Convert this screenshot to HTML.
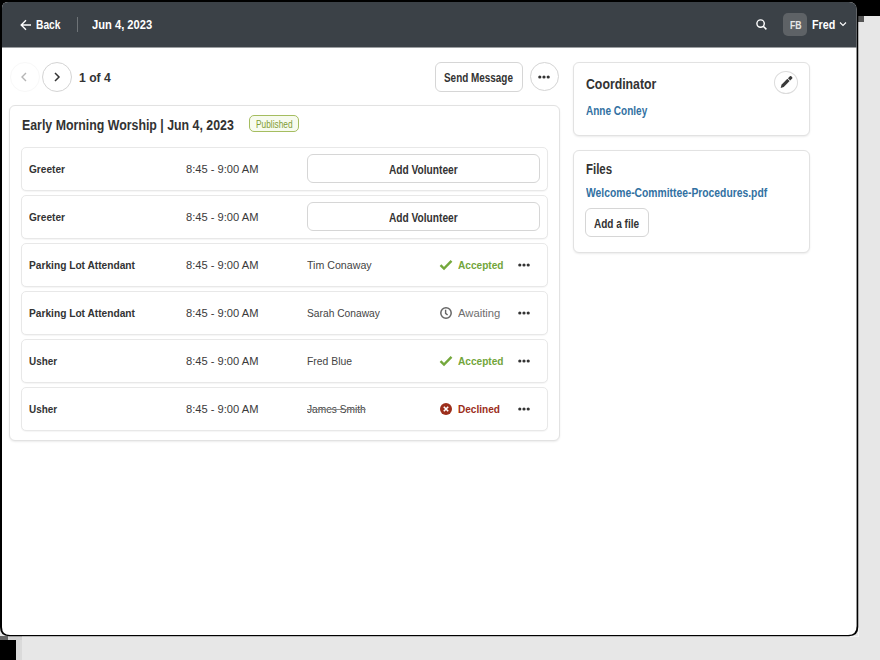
<!DOCTYPE html>
<html><head><meta charset="utf-8">
<style>
*{box-sizing:border-box;margin:0;padding:0}
html,body{width:880px;height:660px;overflow:hidden;background:#e7e7e7;font-family:"Liberation Sans",sans-serif;position:relative}
.abs{position:absolute}
.t{position:absolute;white-space:nowrap;line-height:1;transform-origin:0 0}
.w{color:#fff;font-weight:bold}
.card{position:absolute;background:#fff;border:1px solid #e2e2e2;border-radius:6px;box-shadow:0 1px 2px rgba(0,0,0,0.08)}
.row{position:absolute;left:21px;width:527px;height:44px;border:1px solid #e8e8e8;border-radius:5px;background:#fff;box-shadow:0 1px 1px rgba(0,0,0,0.04)}
.btn{position:absolute;border:1px solid #d6d6d6;border-radius:6px;background:#fff}
.circ{position:absolute;border:1px solid #d4d4d4;border-radius:50%;background:#fff}
.fbt{font-size:10px;font-weight:bold;color:#e6e6e6}
.pgt{font-size:13px;font-weight:bold;color:#333}
.h1{font-size:14px;font-weight:bold;color:#333}
.pubt{font-size:10px;color:#7f9c35}
.role{font-size:11px;font-weight:bold;color:#333}
.time{font-size:11px;color:#3a3a3a}
.name{font-size:11px;color:#444}
.strike{text-decoration:line-through;text-decoration-color:#8a8a8a;text-decoration-thickness:1px}
.bt{font-size:12px;font-weight:bold;color:#333}
.st{font-size:11px;font-weight:bold}
.acc{color:#72a53a}.awt{color:#6e6e6e;font-weight:normal}.dec{color:#9c2e1b}
.h2{font-size:14px;font-weight:bold;color:#333}
.link{font-size:12px;font-weight:bold;color:#3271a2}

</style></head><body>
<div class="abs" style="left:858px;top:0;width:22px;height:16px;background:#000"></div>
<div class="abs" style="left:858px;top:16px;width:6px;height:6px;background:#555"></div>
<div class="abs" style="left:0;top:640px;width:16px;height:20px;background:#000"></div>
<div class="abs" style="left:8px;top:636px;width:14px;height:4px;background:#d2d2d2"></div>
<div class="abs" style="left:16px;top:640px;width:6px;height:20px;background:#dadada"></div>
<div class="abs" style="left:0;top:636px;width:8px;height:4px;background:#666"></div>
<div class="abs" style="left:858px;top:22px;width:1px;height:615px;background:#f6f6f6"></div>
<div class="abs" style="left:22px;top:636px;width:836px;height:1px;background:#f6f6f6"></div>
<svg class="abs" style="left:0;top:0" width="880" height="660"><path d="M0 0H858.3V627Q858.3 636.2 849 636.2H9Q0 636.2 0 627Z" fill="#000"/><path d="M8 2H849Q856.6 2 856.6 9.5V626Q856.6 635 848 635H10Q2 635 2 627V8Q2 2 8 2Z" fill="#fff"/><path d="M8 2H849Q856.6 2 856.6 9.5V47.5H2V8Q2 2 8 2Z" fill="#3b4147"/></svg>
<svg class="abs" style="left:20px;top:19px" width="12" height="12" viewBox="0 0 12 12"><path d="M11 6H1.5M6 1.2L1.2 6 6 10.8" stroke="#fff" stroke-width="1.4" fill="none"/></svg>
<div class="abs" style="left:77px;top:17px;width:1px;height:15px;background:#6e7377"></div>
<svg class="abs" style="left:755px;top:18px" width="14" height="14" viewBox="0 0 14 14"><circle cx="5.6" cy="5.6" r="3.7" stroke="#fff" stroke-width="1.4" fill="none"/><path d="M8.3 8.3L11.4 11.4" stroke="#fff" stroke-width="1.5"/></svg>
<div class="abs" style="left:783px;top:13px;width:24px;height:23px;background:#5e6266;border-radius:5px"></div>
<svg class="abs" style="left:839px;top:21px" width="8" height="6" viewBox="0 0 8 6"><path d="M1 1.5L4 4.5 7 1.5" stroke="#fff" stroke-width="1.1" fill="none"/></svg>
<div class="circ" style="left:10px;top:62px;width:30px;height:30px;border-color:#f8f8f8"></div>
<svg class="abs" style="left:19px;top:71px" width="10" height="12" viewBox="0 0 10 12"><path d="M7 2L3 6 7 10" stroke="#b5b5b5" stroke-width="1.4" fill="none"/></svg>
<div class="circ" style="left:42px;top:62px;width:30px;height:30px"></div>
<svg class="abs" style="left:52px;top:71px" width="10" height="12" viewBox="0 0 10 12"><path d="M3 2L7 6 3 10" stroke="#333" stroke-width="1.5" fill="none"/></svg>
<div class="btn" style="left:435px;top:62px;width:88px;height:30px"></div>
<div class="circ" style="left:530px;top:62px;width:29px;height:29px"></div>
<svg class="abs" style="left:537px;top:74px" width="14" height="6" viewBox="0 0 14 6"><circle cx="2.8" cy="3" r="1.6" fill="#333"/><circle cx="7" cy="3" r="1.6" fill="#333"/><circle cx="11.2" cy="3" r="1.6" fill="#333"/></svg>
<div class="card" style="left:9px;top:105px;width:551px;height:336px"></div>
<div class="abs" style="left:249px;top:115px;width:50px;height:17px;border:1px solid #a5bd60;border-radius:5px;background:#f7fbef"></div>
<div class="card" style="left:573px;top:62px;width:237px;height:74px"></div>
<div class="circ" style="left:774px;top:71px;width:24px;height:23px;border-color:#dcdcdc"></div>
<svg class="abs" style="left:779px;top:75px" width="14" height="14" viewBox="0 0 14 14"><path d="M1.7 12.9L2.47 9.67 8.37 3.77 10.63 6.03 4.73 11.93Z" fill="#3a3a3a"/><path d="M8.97 3.17L10.9 1.2Q11.6 0.6 12.3 1.3L13.2 2.2Q13.8 2.9 13.2 3.5L11.23 5.43Z" fill="#3a3a3a"/></svg>
<div class="card" style="left:573px;top:150px;width:237px;height:103px"></div>
<div class="btn" style="left:585px;top:208px;width:64px;height:29px"></div>

<div class="row" style="top:147px"></div>
<div class="btn" style="left:307px;top:154px;width:233px;height:29px"></div>
<div class="row" style="top:195px"></div>
<div class="btn" style="left:307px;top:202px;width:233px;height:29px"></div>
<div class="row" style="top:243px"></div>
<svg class="abs" style="left:439px;top:259px" width="14" height="12" viewBox="0 0 14 12"><path d="M1.5 6.2L5 9.6 12.5 1.8" stroke="#74a83c" stroke-width="2.4" fill="none"/></svg>
<svg class="abs" style="left:517px;top:262px" width="14" height="6" viewBox="0 0 14 6"><circle cx="2.8" cy="3" r="1.6" fill="#333"/><circle cx="7" cy="3" r="1.6" fill="#333"/><circle cx="11.2" cy="3" r="1.6" fill="#333"/></svg>
<div class="row" style="top:291px"></div>
<svg class="abs" style="left:439px;top:306px" width="14" height="14" viewBox="0 0 14 14"><circle cx="7" cy="7" r="5.2" stroke="#666" stroke-width="1.5" fill="none"/><path d="M6.6 3.8V7.4L8.6 9" stroke="#666" stroke-width="1.4" fill="none"/></svg>
<svg class="abs" style="left:517px;top:310px" width="14" height="6" viewBox="0 0 14 6"><circle cx="2.8" cy="3" r="1.6" fill="#333"/><circle cx="7" cy="3" r="1.6" fill="#333"/><circle cx="11.2" cy="3" r="1.6" fill="#333"/></svg>
<div class="row" style="top:339px"></div>
<svg class="abs" style="left:439px;top:355px" width="14" height="12" viewBox="0 0 14 12"><path d="M1.5 6.2L5 9.6 12.5 1.8" stroke="#74a83c" stroke-width="2.4" fill="none"/></svg>
<svg class="abs" style="left:517px;top:358px" width="14" height="6" viewBox="0 0 14 6"><circle cx="2.8" cy="3" r="1.6" fill="#333"/><circle cx="7" cy="3" r="1.6" fill="#333"/><circle cx="11.2" cy="3" r="1.6" fill="#333"/></svg>
<div class="row" style="top:387px"></div>
<svg class="abs" style="left:439px;top:402px" width="14" height="14" viewBox="0 0 14 14"><circle cx="7" cy="7" r="6" fill="#9c2e1b"/><path d="M4.8 4.8L9.2 9.2M9.2 4.8L4.8 9.2" stroke="#fff" stroke-width="1.6"/></svg>
<svg class="abs" style="left:517px;top:406px" width="14" height="6" viewBox="0 0 14 6"><circle cx="2.8" cy="3" r="1.6" fill="#333"/><circle cx="7" cy="3" r="1.6" fill="#333"/><circle cx="11.2" cy="3" r="1.6" fill="#333"/></svg>
<div id="back" class="t w" style="left:36.00px;top:19.00px;transform:scaleX(0.8206);font-size:12.5px">Back</div>
<div id="date" class="t w" style="left:92.00px;top:18.00px;transform:scaleX(0.8585);font-size:13px">Jun 4, 2023</div>
<div id="fb" class="t fbt" style="left:789.50px;top:21.00px;transform:scaleX(0.8706);">FB</div>
<div id="fred" class="t w" style="left:812.45px;top:19.00px;transform:scaleX(0.8597);font-size:12.5px">Fred</div>
<div id="pg" class="t pgt" style="left:79.45px;top:71.00px;transform:scaleX(0.9356);">1 of 4</div>
<div id="send" class="t bt" style="left:444.00px;top:72.00px;transform:scaleX(0.8267);">Send Message</div>
<div id="title" class="t h1" style="left:22.00px;top:118.00px;transform:scaleX(0.8818);">Early Morning Worship | Jun 4, 2023</div>
<div id="pub" class="t pubt" style="left:256.25px;top:120.00px;transform:scaleX(0.8336);">Published</div>
<div id="role0" class="t role" style="left:29.00px;top:164.00px;transform:scaleX(0.9203);">Greeter</div>
<div id="time0" class="t time" style="left:186.00px;top:164.00px;transform:scaleX(1.0127);">8:45 - 9:00 AM</div>
<div id="addv0" class="t bt" style="left:389.00px;top:164.00px;transform:scaleX(0.8463);">Add Volunteer</div>
<div id="role1" class="t role" style="left:29.00px;top:212.00px;transform:scaleX(0.9203);">Greeter</div>
<div id="time1" class="t time" style="left:186.00px;top:212.00px;transform:scaleX(1.0127);">8:45 - 9:00 AM</div>
<div id="addv1" class="t bt" style="left:389.00px;top:212.00px;transform:scaleX(0.8463);">Add Volunteer</div>
<div id="role2" class="t role" style="left:29.00px;top:260.00px;transform:scaleX(0.9256);">Parking Lot Attendant</div>
<div id="time2" class="t time" style="left:186.00px;top:260.00px;transform:scaleX(1.0127);">8:45 - 9:00 AM</div>
<div id="name2" class="t name" style="left:307.45px;top:260.00px;transform:scaleX(0.9667);">Tim Conaway</div>
<div id="st2" class="t st acc" style="left:458.45px;top:260.00px;transform:scaleX(0.9179);">Accepted</div>
<div id="role3" class="t role" style="left:29.00px;top:308.00px;transform:scaleX(0.9256);">Parking Lot Attendant</div>
<div id="time3" class="t time" style="left:186.00px;top:308.00px;transform:scaleX(1.0127);">8:45 - 9:00 AM</div>
<div id="name3" class="t name" style="left:307.45px;top:308.00px;transform:scaleX(0.9316);">Sarah Conaway</div>
<div id="st3" class="t st awt" style="left:458.45px;top:308.00px;transform:scaleX(1.0228);">Awaiting</div>
<div id="role4" class="t role" style="left:29.00px;top:356.00px;transform:scaleX(0.9024);">Usher</div>
<div id="time4" class="t time" style="left:186.00px;top:356.00px;transform:scaleX(1.0127);">8:45 - 9:00 AM</div>
<div id="name4" class="t name" style="left:307.00px;top:356.00px;transform:scaleX(0.9446);">Fred Blue</div>
<div id="st4" class="t st acc" style="left:458.45px;top:356.00px;transform:scaleX(0.9179);">Accepted</div>
<div id="role5" class="t role" style="left:29.00px;top:404.00px;transform:scaleX(0.9024);">Usher</div>
<div id="time5" class="t time" style="left:186.00px;top:404.00px;transform:scaleX(1.0127);">8:45 - 9:00 AM</div>
<div id="name5" class="t name strike" style="left:307.00px;top:404.00px;transform:scaleX(0.9227);">James Smith</div>
<div id="st5" class="t st dec" style="left:458.45px;top:404.00px;transform:scaleX(0.9127);">Declined</div>
<div id="coord" class="t h2" style="left:585.90px;top:77.00px;transform:scaleX(0.8777);">Coordinator</div>
<div id="anne" class="t link" style="left:585.90px;top:105.00px;transform:scaleX(0.8351);">Anne Conley</div>
<div id="files" class="t h2" style="left:585.90px;top:162.00px;transform:scaleX(0.8189);">Files</div>
<div id="wlink" class="t link" style="left:585.90px;top:187.00px;transform:scaleX(0.8605);">Welcome-Committee-Procedures.pdf</div>
<div id="addf" class="t bt" style="left:594.00px;top:218.00px;transform:scaleX(0.8349);">Add a file</div>
</body></html>
